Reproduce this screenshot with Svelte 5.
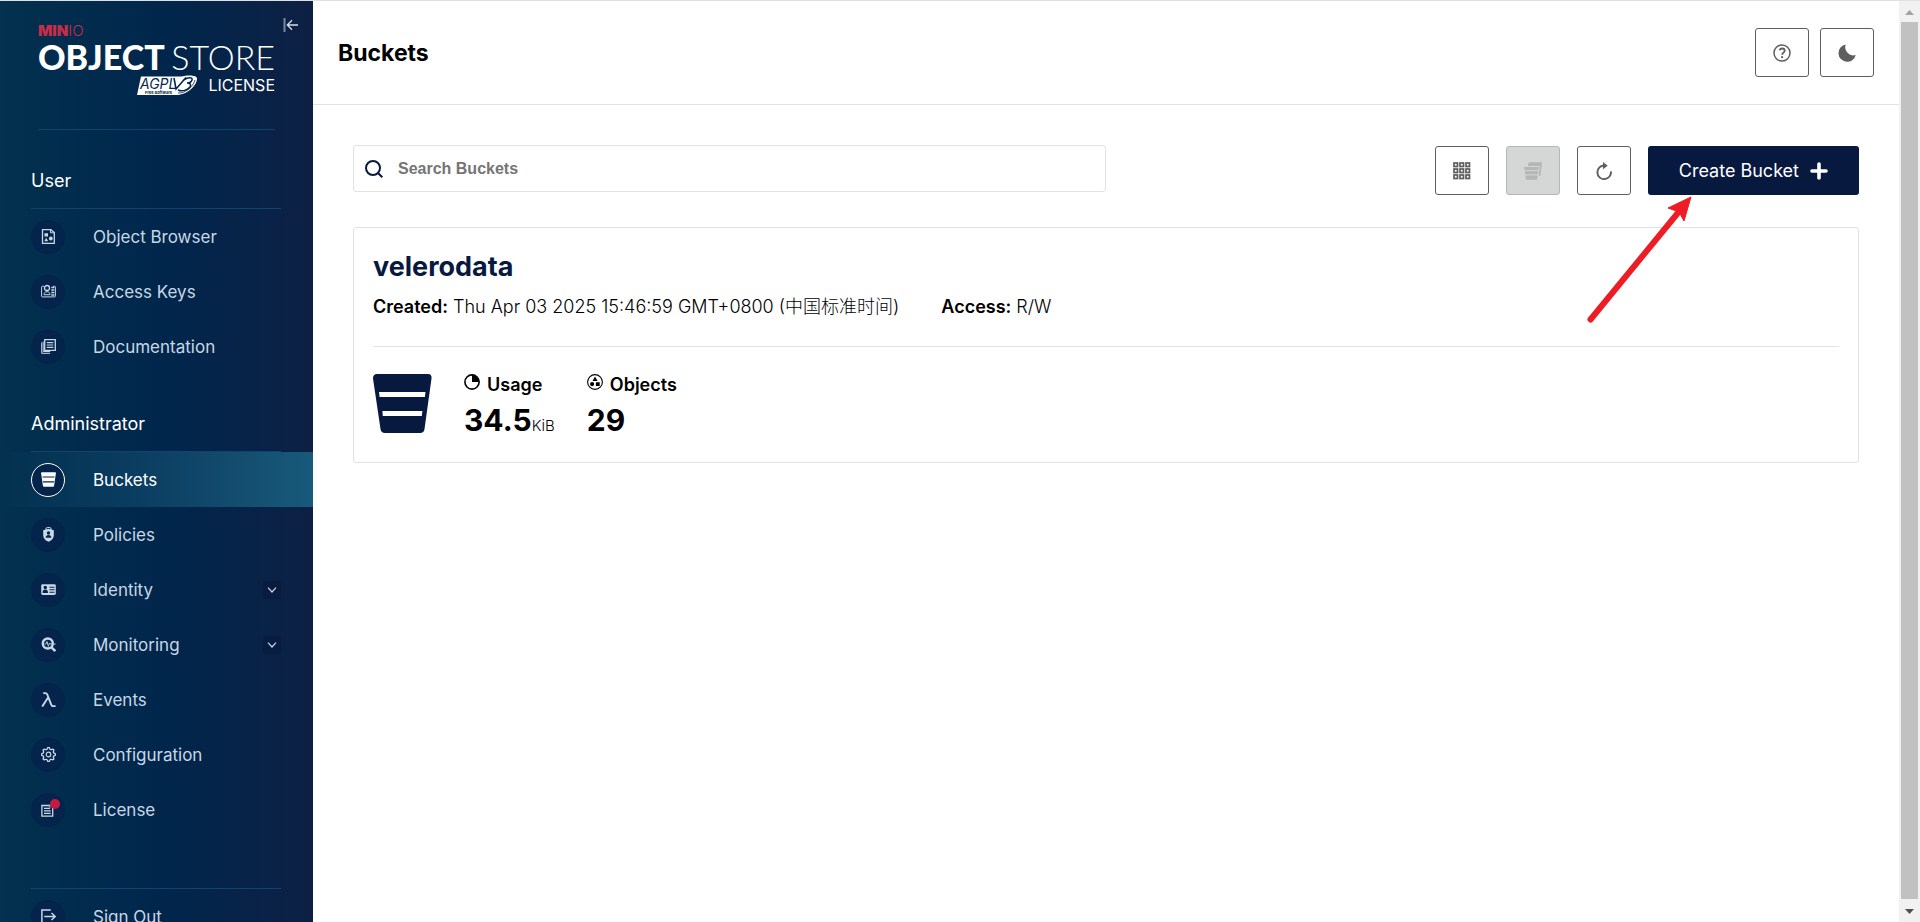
<script>
	let search = '';

	const userItems = [
		{ label: 'Object Browser', icon: 'browser' },
		{ label: 'Access Keys', icon: 'keys' },
		{ label: 'Documentation', icon: 'docs' }
	];

	const adminItems = [
		{ label: 'Buckets', icon: 'bucket', active: true },
		{ label: 'Policies', icon: 'policy' },
		{ label: 'Identity', icon: 'identity', group: true },
		{ label: 'Monitoring', icon: 'monitoring', group: true },
		{ label: 'Events', icon: 'lambda' },
		{ label: 'Configuration', icon: 'gear' },
		{ label: 'License', icon: 'license', badge: true }
	];

	const sections = [
		{ title: 'User', items: userItems },
		{ title: 'Administrator', items: adminItems }
	];

	const signOut = [{ label: 'Sign Out', icon: 'logout' }];

	const buckets = [
		{
			name: 'velerodata',
			created: 'Thu Apr 03 2025 15:46:59 GMT+0800 (中国标准时间)',
			access: 'R/W',
			usage: '34.5',
			unit: 'KiB',
			objects: 29
		}
	];

	$: visible = buckets.filter((b) => b.name.includes(search));

	// eight teeth around the configuration wheel
	const gearPath = Array.from({ length: 32 }, (_, i) => {
		const r = i % 4 < 2 ? 7 : 5.4;
		const a = ((i - 0.5) * Math.PI) / 16;
		return `${i ? 'L' : 'M'}${(7.5 + r * Math.cos(a)).toFixed(2)} ${(7.5 + r * Math.sin(a)).toFixed(2)}`;
	}).join('') + 'Z';
</script>

{#snippet menuIcon(name)}
	<svg viewBox="0 0 15 15" width="15" height="15" fill="none" stroke="currentColor" aria-hidden="true">
		{#if name === 'browser'}
			<path d="M1.500.7h8.300L13.300 3.500v10.800H1.500z" stroke-width="1.300" />
			<path d="M9.500.8v3h3.700" />
			<g fill="currentColor" stroke="none">
				<path d="M3.500 4.200H7v3.300H3.500zM5.200 8.700l1.900 3.500H3.300z" />
				<circle cx="9.800" cy="9.500" r="1.900" />
			</g>
		{:else if name === 'keys'}
			<path d="M3 2.300H1.400a.8.8 0 0 0-.8.8v9a.8.8 0 0 0 .8.8h12.200a.8.8 0 0 0 .8-.8v-9a.8.8 0 0 0-.8-.8H12" />
			<circle cx="6" cy="4" r="2.500" stroke-width="1.300" />
			<path d="M3 10.700c0-2 1.200-3 3-3s3 1 3 3z" />
			<path d="M10.300 3.500h3M10.300 6h3M10.300 8.500h3M10.300 11h3" stroke-width="1.400" />
		{:else if name === 'docs'}
			<path d="M3.700.7h10.600v10.600H3.700z" stroke-width="1.300" />
			<path d="M5.800 3.600h6.500M5.800 6h6.500M5.800 8.400h6.500" stroke-width="1.200" />
			<path d="M.7 3.500v10.800H9M2.200 2.500v10h7" />
		{:else if name === 'bucket'}
			<path d="M.8.3h13.400q.8 0 .7.900l-1.800 12.500q-.2 1-1.100 1H3q-.9 0-1.100-1L.1 1.200Q0 .3.800.3z" fill="currentColor" stroke="none" />
			<path d="M1.500 5h12M2 9.800h11" stroke="#05244c" stroke-width="1.200" />
		{:else if name === 'policy'}
			<path d="M4.900 3V2a1.500 1.500 0 0 1 1.500-1.500h2.200A1.500 1.500 0 0 1 10.100 2v1" />
			<path d="M2.200 3.200l5.300-1.400 5.300 1.400v5.300c0 3-2.300 5.200-5.300 6.300-3-1.100-5.300-3.300-5.300-6.300z" fill="currentColor" stroke="none" />
			<g fill="#05244c" stroke="none">
				<circle cx="7.500" cy="6" r="1.700" />
				<path d="M4.700 10.700c0-1.800 1-2.800 2.800-2.800s2.800 1 2.800 2.800z" />
			</g>
		{:else if name === 'identity'}
			<rect x=".2" y="2.200" width="14.600" height="10.800" rx="1.400" fill="currentColor" stroke="none" />
			<g fill="#05244c" stroke="none">
				<circle cx="4.300" cy="5.500" r="1.700" />
				<path d="M1.500 11c0-2.300 1-3.400 2.800-3.400S7 8.700 7 11z" />
			</g>
			<path d="M8.500 5.200h5M8.500 7.700h5M8.500 10.200h5" stroke="#05244c" stroke-width="1.100" />
		{:else if name === 'monitoring'}
			<circle cx="6.800" cy="6.500" r="5" stroke-width="2.400" />
			<path d="M10.500 10.300l3.700 3.700" stroke-width="2.500" />
			<path d="M3.500 7H5l1-2.500 1.300 4.800L8.500 6l.6 1h5.500" stroke-width=".9" />
		{:else if name === 'lambda'}
			<path d="M2.200 1.100h2.200c1.100 0 1.500.5 1.900 1.500l4 10.200c.4 1.100.9 1.400 2 1.400h2.300M7.100 5.400L1.200 14.600" stroke-width="1.900" />
		{:else if name === 'gear'}
			<path d={gearPath} stroke-width="1.300" stroke-linejoin="round" />
			<circle cx="7.500" cy="7.500" r="2.300" stroke-width="1.200" />
		{:else if name === 'license'}
			<path d="M8.500 3.500H.9v10.600h10.800V6" stroke-width="1.300" />
			<path d="M3 6.300h6M3 8.800h6.700M3 11.300h6.700" stroke-width="1.200" />
			<path d="M8.800 2.600v3" />
		{:else if name === 'logout'}
			<path d="M9.800 1H.9v13h8.900" stroke-width="1.500" />
			<path d="M3.300 7.500h10.500M10.500 4l3.700 3.500-3.700 3.500" stroke-width="1.500" />
		{/if}
	</svg>
{/snippet}

{#snippet menuRows(items)}
	<ul>
		{#each items as item}
			<li>
				<a href="#{item.icon}" class="item" class:active={item.active} aria-current={item.active ? 'page' : undefined}>
					<span class="circle">
						{@render menuIcon(item.icon)}
						{#if item.badge}<span class="badge"></span>{/if}
					</span>
					<span class="label">{item.label}</span>
					{#if item.group}
						<span class="chevron">
							<svg viewBox="0 0 10 10" width="10" height="10" fill="none" stroke="currentColor" stroke-width="1.200" aria-hidden="true">
								<path d="M1 2.700l4 4.300 4-4.300" />
							</svg>
						</span>
					{/if}
				</a>
			</li>
		{/each}
	</ul>
{/snippet}

<div class="app">
	<aside>
		<button class="collapse" aria-label="Collapse menu">
			<svg viewBox="0 0 16 16" width="16" height="16" fill="none" stroke="currentColor" aria-hidden="true">
				<path d="M1.500 1v14" stroke-width="2" opacity=".55" />
				<path d="M15 8H4.500M9 3.300L4.300 8 9 12.700" stroke-width="1.300" />
			</svg>
		</button>
		<div class="logo">
			<div class="brand"><b>MIN</b>IO</div>
			<div class="product"><b>OBJECT</b> <span>STORE</span></div>
			<div class="edition">
				<svg viewBox="0 0 62 21" width="62" height="21" aria-hidden="true">
					<path d="M5 1.500h40C51 0 61-.5 61 3.500 61 11 50 20.500 40 20H1z" fill="#fff" />
					<text x="4" y="13.500" class="agpl">AGPL</text>
					<text x="9" y="18.500" class="free">Free Software</text>
					<path d="M38 3l2 11L50 2.500" fill="none" stroke="#02264b" stroke-width="1.600" />
					<path d="M48 5c4-3 9-3 8 0-.6 2-3 3-5 3 3 0 4.500 1 3 4-2 3-8 5-12 3" fill="none" stroke="#02264b" stroke-width="1.500" />
					<path d="M42 18c7 .5 15-6 17-13" fill="none" stroke="#02264b" stroke-width=".8" />
				</svg>
				<span>LICENSE</span>
			</div>
		</div>

		<nav>
			{#each sections as section}
				<h2>{section.title}</h2>
				{@render menuRows(section.items)}
			{/each}
			<div class="sign-out">
				{@render menuRows(signOut)}
			</div>
		</nav>
	</aside>

	<main>
		<header>
			<h1>Buckets</h1>
			<div class="actions">
				<button class="tool" aria-label="Help">
					<svg viewBox="0 0 18 18" width="18" height="18" fill="none" stroke="currentColor" aria-hidden="true">
						<circle cx="9" cy="9" r="8" stroke-width="1.500" />
						<path d="M6.500 6.300C7 5 8 4.500 9.200 4.500c1.500 0 2.500.9 2.500 2.200 0 1.900-2.500 1.900-2.500 4" stroke-width="1.800" />
						<circle cx="9.100" cy="13.200" r="1.100" fill="currentColor" stroke="none" />
					</svg>
				</button>
				<button class="tool" aria-label="Dark mode">
					<svg viewBox="0 0 18 18" width="18" height="18" fill="currentColor" aria-hidden="true">
						<path d="M7.800.500a8.700 8.700 0 1 0 9.900 10.500A8 8 0 0 1 7.800.500z" />
					</svg>
				</button>
			</div>
		</header>

		<div class="content">
			<div class="toolbar">
				<label class="search">
					<svg viewBox="0 0 18 18" width="18" height="18" fill="none" stroke="#07193e" stroke-width="2" aria-hidden="true">
						<circle cx="8" cy="8" r="7" />
						<path d="M13 13l4.300 4.300" />
					</svg>
					<input type="text" placeholder="Search Buckets" aria-label="Search Buckets" bind:value={search} />
				</label>
				<div class="tools">
					<button class="tool" aria-label="Grid view">
						<svg viewBox="0 0 18 18" width="18" height="18" fill="none" stroke="currentColor" stroke-width="1.700" aria-hidden="true">
							{#each [1, 7, 13] as y}
								{#each [1, 7, 13] as x}
									<rect {x} {y} width="3.500" height="3.500" />
								{/each}
							{/each}
						</svg>
					</button>
					<button class="tool" aria-label="Select multiple" disabled>
						<svg viewBox="0 0 18 18" width="18" height="18" fill="currentColor" aria-hidden="true">
							<path d="M4.600.3h13q.5 0 .4.600L16.500 13q-.1.900-1 .9h-1l1.200-9q.1-1-1-1H4z" />
							<path d="M.5 4.900h13.800q.5 0 .4.600l-1.500 11.700q-.1.600-.7.600H2.600q-.6 0-.7-.6L.1 5.500Q0 4.900.5 4.900z" />
							<path d="M.5 8.600h15M1 12.900h14" stroke="#d5d7d7" stroke-width="1" />
						</svg>
					</button>
					<button class="tool" aria-label="Refresh">
						<svg viewBox="0 0 18 18" width="18" height="18" fill="none" stroke="currentColor" stroke-width="1.900" aria-hidden="true">
							<path d="M9.500 3.500A6.800 6.800 0 1 0 15.900 9.300" />
							<path d="M8 0l4.700 3.800L8 7.300z" fill="currentColor" stroke="none" />
						</svg>
					</button>
					<div class="create-wrap">
						<button class="create">
							Create Bucket
							<svg viewBox="0 0 18 18" width="18" height="18" stroke="currentColor" stroke-width="3.600" stroke-linecap="round" aria-hidden="true">
								<path d="M9 2v14M2 9h14" />
							</svg>
						</button>
						<svg class="pointer" viewBox="0 0 106 128" width="106" height="128" fill="#ee1c25" aria-hidden="true">
							<path d="M4.500 123.500L91 18" stroke="#ee1c25" stroke-width="6" stroke-linecap="round" />
							<path d="M105 1L98 25l-5-9-11-4z" stroke="#ee1c25" stroke-width="1" />
						</svg>
					</div>
				</div>
			</div>

			{#each visible as bucket}
				<article class="card">
					<h2>{bucket.name}</h2>
					<div class="meta">
						<span><b>Created:</b> {bucket.created}</span>
						<span><b>Access:</b> {bucket.access}</span>
					</div>
					<div class="stats">
						<svg viewBox="0 0 59 59" width="59" height="59" aria-hidden="true">
							<path d="M4 0h51q4 0 3.500 4.500L51.500 55q-.5 4-4.500 4H12q-4 0-4.500-4L0 4.500Q0 0 4 0z" fill="#07193e" />
							<path d="M6 18h46.500l-.6 5H6.600zM9.400 37h40l-.6 5H9.800z" fill="#fff" />
						</svg>
						<div class="stat">
							<div class="stat-label">
								<svg viewBox="0 0 16 16" width="16" height="16" aria-hidden="true">
									<circle cx="8" cy="8" r="7.100" fill="none" stroke="#000" stroke-width="1.600" />
									<path d="M8 8V.5A7.500 7.500 0 0 1 15.500 8z" />
								</svg>
								Usage
							</div>
							<div class="value">{bucket.usage}<small>{bucket.unit}</small></div>
						</div>
						<div class="stat">
							<div class="stat-label">
								<svg viewBox="0 0 16 16" width="16" height="16" aria-hidden="true">
									<circle cx="8" cy="8" r="7.400" fill="none" stroke="#000" stroke-width="1.100" />
									<path d="M8 2.500l2.500 4.500h-5zM8.900 8.200h3.800v3.800H8.900z" />
									<circle cx="5.100" cy="10.100" r="2.100" />
								</svg>
								Objects
							</div>
							<div class="value">{bucket.objects}</div>
						</div>
					</div>
				</article>
			{/each}
		</div>
	</main>

	<div class="scrollbar" aria-hidden="true">
		<svg viewBox="0 0 9 5" width="9" height="5"><path d="M0 5L4.500 0 9 5z" fill="#a3a3a3" /></svg>
		<div class="thumb"></div>
		<svg viewBox="0 0 9 5" width="9" height="5"><path d="M0 0l4.500 5L9 0z" fill="#505050" /></svg>
	</div>
</div>

<style>
	:global(body) {
		margin: 0;
		background: #fff;
		overflow: hidden;
	}

	.app {
		display: flex;
		box-sizing: border-box;
		height: 100vh;
		border-top: 1px solid #dfe1e0;
		color: #000;
		font-family: Inter, 'Noto Sans CJK SC', sans-serif;
		font-size: 18px;
		line-height: 24px;
	}

	svg {
		display: block;
		flex: none;
	}

	button {
		font: inherit;
		cursor: pointer;
	}

	/* sidebar */
	aside {
		position: relative;
		flex: none;
		width: 313px;
		overflow: hidden;
		background: linear-gradient(90deg, #03314f 0%, #00264c 50%, #0d2044 100%);
		color: #fff;
	}

	.collapse {
		position: absolute;
		top: 16px;
		right: 14px;
		padding: 0;
		border: 0;
		background: none;
		color: #d5dee8;
	}

	.logo {
		box-sizing: border-box;
		height: 129px;
		margin: 0 38px 1px;
		padding-top: 21px;
		border-bottom: 1px solid #104470;
		white-space: nowrap;
	}

	.brand {
		color: #c72c48;
		font-size: 15px;
		font-weight: 300;
		line-height: 18px;
	}

	.brand b {
		font-weight: 900;
	}

	.product {
		display: flex;
		justify-content: space-between;
		font-family: Lato, sans-serif;
		font-size: 34px;
		font-weight: 300;
		line-height: 34px;
	}

	.product b {
		font-weight: 900;
	}

	.edition {
		display: flex;
		align-items: center;
		justify-content: flex-end;
		gap: 10px;
		margin-top: 1px;
		font-size: 16px;
		line-height: 21px;
	}

	.agpl {
		fill: #02264b;
		font: italic 14px Inter, sans-serif;
	}

	.free {
		fill: #02264b;
		font: bold 4px Inter, sans-serif;
	}

	nav h2 {
		margin: 0 32px 0 31px;
		padding: 38px 0 15px;
		border-bottom: 1px solid #104470;
		font-size: 18px;
		font-weight: 400;
	}

	ul {
		margin: 0;
		padding: 0;
		list-style: none;
	}

	.item {
		display: flex;
		align-items: center;
		height: 55px;
		padding: 0 32px 0 31px;
		color: #c8d7e6;
		font-size: 17px;
		text-decoration: none;
	}

	.item.active {
		background: linear-gradient(90deg, transparent 0%, #175a7b 100%);
		color: #fff;
	}

	.circle {
		position: relative;
		display: flex;
		align-items: center;
		justify-content: center;
		box-sizing: border-box;
		width: 34px;
		height: 34px;
		border: 1px solid #042149;
		border-radius: 50%;
		background: #05244c;
	}

	.active .circle {
		border-color: #fff;
	}

	.badge {
		position: absolute;
		top: 5px;
		right: 4px;
		width: 10px;
		height: 10px;
		border-radius: 50%;
		background: #c51b3f;
	}

	.label {
		flex: 1;
		margin-left: 28px;
	}

	.chevron {
		display: flex;
		align-items: center;
		justify-content: center;
		width: 18px;
		height: 18px;
		border-radius: 2px;
		background: #081c42;
	}

	.sign-out {
		margin-top: 51px;
	}

	.sign-out::before {
		content: '';
		display: block;
		height: 1px;
		margin: 0 32px 0 31px;
		background: #104470;
	}

	/* page */
	main {
		flex: 1;
		min-width: 0;
	}

	header {
		display: flex;
		align-items: center;
		justify-content: space-between;
		box-sizing: border-box;
		height: 104px;
		padding: 0 25px;
		border-bottom: 1px solid #e2e2e2;
	}

	h1 {
		margin: 0;
		font-size: 23px;
		font-weight: 700;
		line-height: 28px;
	}

	.actions {
		display: flex;
		gap: 11px;
	}

	.tool {
		display: flex;
		align-items: center;
		justify-content: center;
		box-sizing: border-box;
		width: 54px;
		height: 49px;
		padding: 0;
		border: 1px solid #5e5e5e;
		border-radius: 3px;
		background: #fff;
		color: #5e5e5e;
	}

	.tool:disabled {
		border-color: #b5b7b7;
		background: #d5d7d7;
		color: #b5b7b7;
	}

	.content {
		padding: 40px;
	}

	.toolbar {
		display: flex;
		justify-content: space-between;
		margin-bottom: 32px;
	}

	.search {
		display: flex;
		align-items: center;
		box-sizing: border-box;
		width: 50%;
		height: 47px;
		padding: 0 11px;
		border: 1px solid #e2e2e2;
		border-radius: 3px;
	}

	.search input {
		flex: 1;
		min-width: 0;
		margin-left: 15px;
		padding: 0;
		border: 0;
		outline: 0;
		background: none;
		font: bold 16px 'Liberation Sans', sans-serif;
	}

	.search input::placeholder {
		color: #757575;
		opacity: 1;
	}

	.tools {
		display: flex;
		gap: 17px;
		padding-top: 1px;
	}

	.create-wrap {
		position: relative;
	}

	.create {
		display: flex;
		align-items: center;
		gap: 11px;
		height: 49px;
		padding: 0 31px;
		border: 0;
		border-radius: 3px;
		background: #07193e;
		color: #fff;
		white-space: nowrap;
	}

	/* red arrow aimed at the create button */
	.pointer {
		position: absolute;
		top: 50px;
		left: -62px;
		pointer-events: none;
	}

	.card {
		padding: 23px 19px 18px;
		border: 1px solid #e2e2e2;
		border-radius: 3px;
	}

	.card h2 {
		margin: 0;
		color: #07193e;
		font-size: 27px;
		font-weight: 700;
		line-height: 32px;
	}

	.meta {
		display: flex;
		gap: 42px;
		padding: 12px 0 27px;
		border-bottom: 1px solid #e2e2e2;
		font-weight: 300;
	}

	.meta b,
	.stat-label {
		font-weight: 600;
	}

	.stats {
		display: flex;
		margin-top: 27px;
	}

	.stat {
		margin-left: 32px;
	}

	.stat-label {
		display: flex;
		gap: 7px;
		line-height: 22px;
	}

	.value {
		margin-top: 6px;
		font-size: 30px;
		font-weight: 700;
		line-height: 36px;
	}

	small {
		font-size: 15px;
		font-weight: 300;
	}

	.scrollbar {
		display: flex;
		flex: none;
		flex-direction: column;
		align-items: center;
		justify-content: space-between;
		gap: 7px;
		box-sizing: border-box;
		width: 21px;
		padding: 9px 2px 8px;
		background: #f1f1f1;
	}

	.thumb {
		flex: 1;
		width: 100%;
		margin-bottom: 3px;
		background: #c1c1c1;
	}
</style>
